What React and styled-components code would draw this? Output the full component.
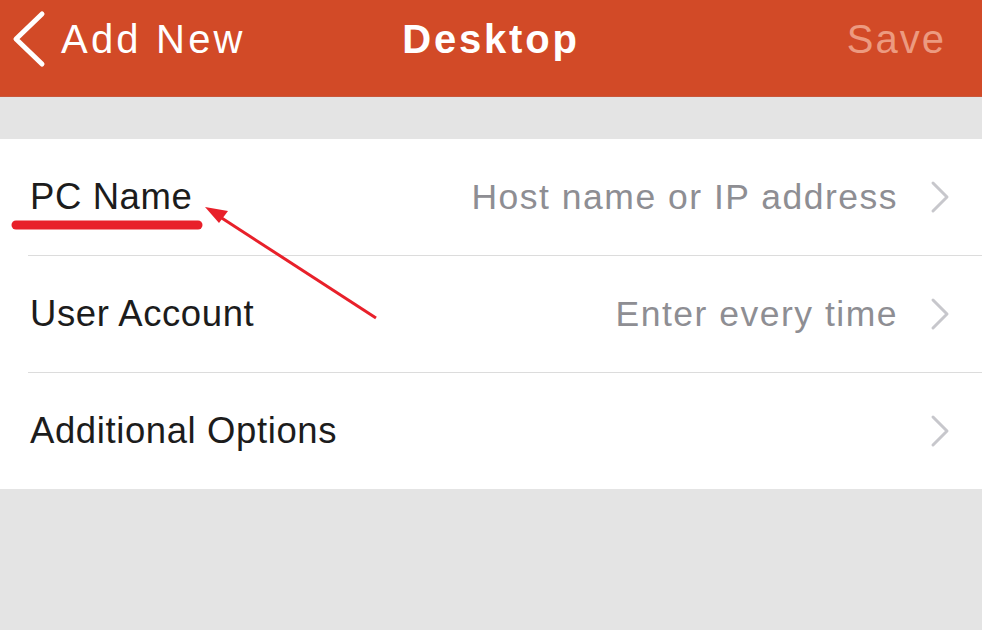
import React from 'react';
import styled, { createGlobalStyle } from 'styled-components';

const rows = [
  { label: 'PC Name', value: 'Host name or IP address' },
  { label: 'User Account', value: 'Enter every time' },
  { label: 'Additional Options', value: '' },
];

export default function App() {
  return (
    <Screen>
      <GlobalStyle />
      <NavBar>
        <BackButton>
          <svg width="34" height="58" viewBox="0 0 34 58">
            <path
              d="M30 4 L4 29 L30 54"
              fill="none"
              stroke="#fff"
              strokeWidth="5"
              strokeLinecap="round"
              strokeLinejoin="round"
            />
          </svg>
          <span>Add New</span>
        </BackButton>
        <Title>Desktop</Title>
        <SaveButton>Save</SaveButton>
      </NavBar>
      <Spacer />
      <List>
        {rows.map((row) => (
          <Row key={row.label}>
            <Label>{row.label}</Label>
            <Value>{row.value}</Value>
            <Chevron width="20" height="34" viewBox="0 0 20 34">
              <path
                d="M3 3 L17 17 L3 31"
                fill="none"
                stroke="#c7c7cc"
                strokeWidth="3"
                strokeLinecap="round"
                strokeLinejoin="round"
              />
            </Chevron>
          </Row>
        ))}
      </List>
      <Markup width="982" height="630" viewBox="0 0 982 630">
        <line
          x1="16"
          y1="225"
          x2="198"
          y2="225"
          stroke="#e8202a"
          strokeWidth="9"
          strokeLinecap="round"
        />
        <line x1="376" y1="318" x2="214" y2="213" stroke="#e8202a" strokeWidth="3" />
        <path d="M205 207 L228 211 L219 223 Z" fill="#e8202a" />
      </Markup>
    </Screen>
  );
}

const GlobalStyle = createGlobalStyle`
  html, body {
    margin: 0;
    padding: 0;
    background: #e4e4e4;
  }
`;

const Screen = styled.div`
  position: relative;
  width: 982px;
  height: 630px;
  overflow: hidden;
  background: #e4e4e4;
  font-family: 'Liberation Sans', Arial, sans-serif;
`;

const NavBar = styled.header`
  display: grid;
  grid-template-columns: 1fr auto 1fr;
  align-items: center;
  height: 97px;
  padding: 0 12px 18px 12px;
  box-sizing: border-box;
  background: #d24a27;
  border-bottom: 1px solid #c9573b;
`;

const BackButton = styled.div`
  display: flex;
  align-items: center;
  gap: 15px;
  color: #fff;
  font-size: 40px;
  letter-spacing: 3.2px;

  svg {
    display: block;
  }
`;

const Title = styled.div`
  color: #fff;
  font-size: 40px;
  font-weight: bold;
  letter-spacing: 2.8px;
`;

const SaveButton = styled.div`
  justify-self: end;
  margin-right: 24px;
  color: #ec9a80;
  font-size: 40px;
  letter-spacing: 2px;
`;

const Spacer = styled.div`
  height: 42px;
`;

const List = styled.div`
  background: #fff;
  padding-left: 28px;
`;

const Row = styled.div`
  display: flex;
  align-items: center;
  height: 116px;
  padding-right: 32px;
  border-bottom: 1px solid #dcdcdc;

  &:last-child {
    border-bottom: none;
  }
`;

const Label = styled.span`
  flex: 1;
  padding-left: 2px;
  color: #1c1c1c;
  font-size: 36.5px;
  letter-spacing: 0.6px;
`;

const Value = styled.span`
  color: #8e8e93;
  font-size: 35.5px;
  letter-spacing: 1.5px;
  margin-right: 32px;
`;

const Chevron = styled.svg`
  display: block;
  flex: none;
`;

const Markup = styled.svg`
  position: absolute;
  left: 0;
  top: 0;
  pointer-events: none;
`;
